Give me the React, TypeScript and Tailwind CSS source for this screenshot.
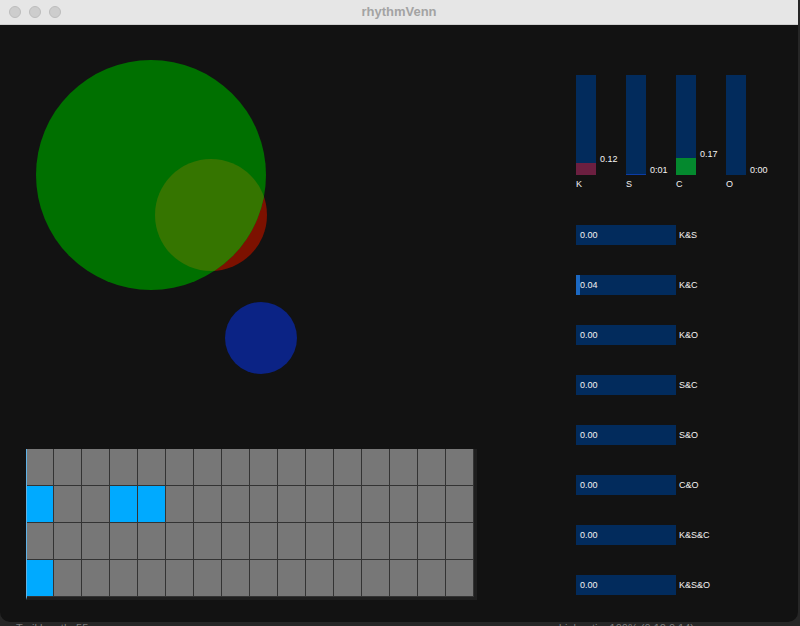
import React from 'react';

const FONT = { fontFamily: '"Liberation Sans", Arial, sans-serif' };

const bars = [
  { label: 'K', value: '0.12', h: 12, fill: 'bg-[#6c1f40]' },
  { label: 'S', value: '0:01', h: 1, fill: 'bg-[#0b3ca6]' },
  { label: 'C', value: '0.17', h: 17, fill: 'bg-[#04892e]' },
  { label: 'O', value: '0:00', h: 0, fill: 'bg-[#0b3ca6]' },
];

const pairs = [
  { label: 'K&S', v: 0 },
  { label: 'K&C', v: 4 },
  { label: 'K&O', v: 0 },
  { label: 'S&C', v: 0 },
  { label: 'S&O', v: 0 },
  { label: 'C&O', v: 0 },
  { label: 'K&S&C', v: 0 },
  { label: 'K&S&O', v: 0 },
];

// pattern rows x 16 steps
const pattern: number[][] = [
  [],
  [0, 3, 4],
  [],
  [0],
];

const Venn: React.FC = () => (
  <svg width={560} height={420} className="block">
    <defs>
      <clipPath id="redClip">
        <circle cx={211} cy={190} r={56} />
      </clipPath>
    </defs>
    <circle cx={211} cy={190} r={56} fill="#7c1100" />
    <circle cx={151} cy={150} r={115} fill="#007000" />
    <circle cx={151} cy={150} r={115} fill="#357500" clipPath="url(#redClip)" />
    <circle cx={261} cy={313} r={36} fill="#0b2385" />
  </svg>
);

const StepGrid: React.FC = () => (
  <div className="ml-[26px] mt-[4px] w-fit border-l border-[#5fb2e6] border-r-[3px] border-b-[3px] border-r-[#1e1e1e] border-b-[#1e1e1e]">
    {pattern.map((row, r) => (
      <div key={r} className="flex">
        {Array.from({ length: 16 }).map((_, c) => (
          <div
            key={c}
            className={`h-[37px] border-r border-b border-[#333333] ${
              row.includes(c) ? 'bg-[#00aaff]' : 'bg-[#777777]'
            } ${c === 0 ? 'w-[27px]' : 'w-[28px]'}`}
          />
        ))}
      </div>
    ))}
  </div>
);

const LevelBars: React.FC = () => (
  <div className="h-[150px] flex gap-[30px]">
    {bars.map((b) => (
      <div key={b.label} className="relative w-[20px]">
        <div className="relative h-[100px] w-[20px] bg-[#022b5c]">
          <div className={`absolute bottom-0 left-0 w-full ${b.fill}`} style={{ height: b.h }} />
        </div>
        <span
          className="absolute left-[24px] text-[9px] leading-none text-[#f2f2f2] whitespace-nowrap"
          style={{ top: 100 - Math.max(b.h, 1) - 8 }}
        >
          {b.value}
        </span>
        <div className="mt-[5px] text-[9px] leading-none text-[#f2f2f2]">{b.label}</div>
      </div>
    ))}
  </div>
);

const PairSliders: React.FC = () => (
  <div className="flex flex-col gap-[30px]">
    {pairs.map((p) => (
      <div key={p.label} className="flex items-center h-[20px]">
        <div className="relative w-[100px] h-[20px] bg-[#022b5c]">
          <div className="absolute left-0 top-0 h-full bg-[#1b68c2]" style={{ width: p.v }} />
          <span className="absolute left-[4px] top-[6px] text-[9px] leading-none text-[#f2f2f2]">
            {(p.v / 100).toFixed(2)}
          </span>
        </div>
        <span className="ml-[3px] text-[9px] leading-none text-[#f2f2f2]">{p.label}</span>
      </div>
    ))}
  </div>
);

export default function App() {
  return (
    <div className="w-[800px] h-[626px] bg-[#262626] flex flex-col overflow-hidden" style={FONT}>
      <div className="w-[798px] h-[622px] shrink-0 flex flex-col rounded-b-[10px] overflow-hidden">
        {/* title bar */}
        <div className="relative h-[25px] shrink-0 bg-[#e6e6e6] flex items-center border-b border-[#cfcfcf]">
          <div className="flex gap-[8px] pl-[9px]">
            <span className="w-[12px] h-[12px] rounded-full bg-[#cdcdcd] border border-[#bdbdbd]" />
            <span className="w-[12px] h-[12px] rounded-full bg-[#cdcdcd] border border-[#bdbdbd]" />
            <span className="w-[12px] h-[12px] rounded-full bg-[#cdcdcd] border border-[#bdbdbd]" />
          </div>
          <div className="absolute inset-0 flex items-center justify-center text-[13px] font-bold text-[#a3a3a3]">
            rhythmVenn
          </div>
        </div>

        {/* sketch */}
        <div className="flex-1 bg-[#121212] flex">
          <div className="w-[560px] shrink-0">
            <Venn />
            <StepGrid />
          </div>
          <div className="pt-[50px] pl-[16px]">
            <LevelBars />
            <PairSliders />
          </div>
        </div>
      </div>
      <div className="h-[4px] overflow-hidden flex justify-between px-[16px] text-[11px] leading-none text-[#7a7a7a]">
        <span className="mt-[1px]">Trail length: 55</span>
        <span className="mt-[1px] mr-[90px]">Link ratio: 100% (0.12 0.14)</span>
      </div>
    </div>
  );
}
